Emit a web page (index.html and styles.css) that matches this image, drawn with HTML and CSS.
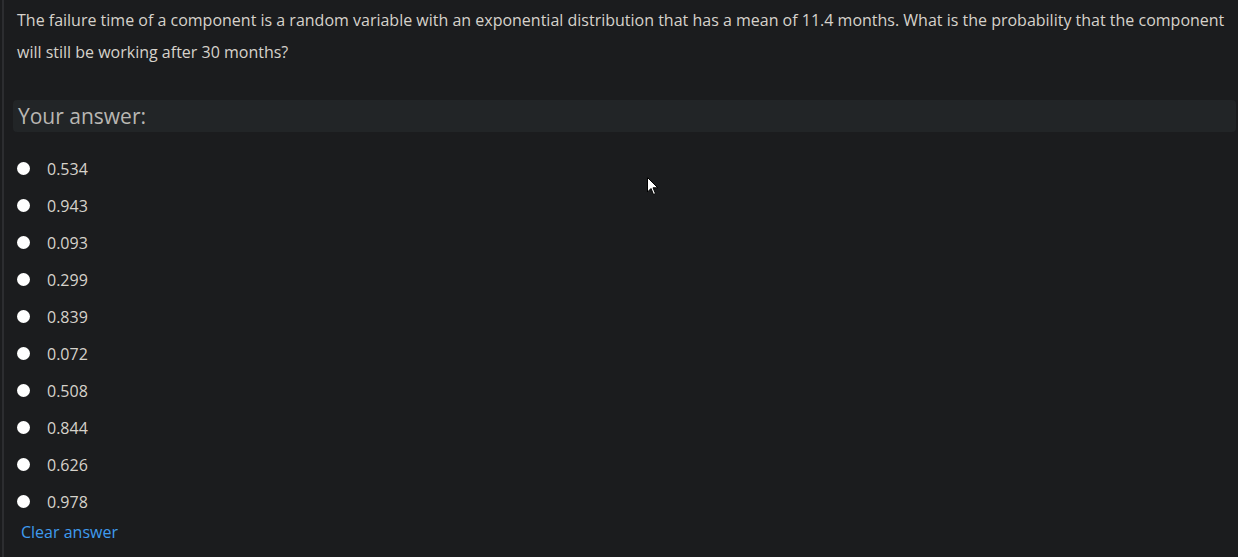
FILE: index.html
```html
<!DOCTYPE html>
<html>
<head>
<meta charset="utf-8">
<link rel="stylesheet" href="styles.css">
</head>
<body>
<div class="page">
  <div class="question">The failure time of a component is a random variable with an exponential distribution that has a mean of 11.4 months. What is the probability that the component will still be working after 30 months?</div>
  <div class="answer-head">Your answer:</div>
  <ul class="options">
    <li><label><input type="radio" name="a"><span>0.534</span></label></li>
    <li><label><input type="radio" name="a"><span>0.943</span></label></li>
    <li><label><input type="radio" name="a"><span>0.093</span></label></li>
    <li><label><input type="radio" name="a"><span>0.299</span></label></li>
    <li><label><input type="radio" name="a"><span>0.839</span></label></li>
    <li><label><input type="radio" name="a"><span>0.072</span></label></li>
    <li><label><input type="radio" name="a"><span>0.508</span></label></li>
    <li><label><input type="radio" name="a"><span>0.844</span></label></li>
    <li><label><input type="radio" name="a"><span>0.626</span></label></li>
    <li><label><input type="radio" name="a"><span>0.978</span></label></li>
  </ul>
  <a class="clear" href="#">Clear answer</a>
  <svg class="cursor" width="12" height="19" viewBox="0 0 12 19"><path d="M0.5 0.5 L0.5 15 L4 11.5 L6.5 17.5 L8.5 16.5 L6 10.8 L10.8 10.8 Z" fill="#fff" stroke="#000" stroke-width="1"/></svg>
</div>
</body>
</html>
```
FILE: styles.css
```css
html, body {
  margin: 0;
  padding: 0;
  background: #1b1c1e;
}
body {
  font-family: "Open Sans", "Noto Sans", sans-serif;
  color: #d6d2cb;
}
.page {
  position: relative;
  height: 557px;
  margin-left: 2px;
  border-left: 2px solid #2c2d30;
  padding: 4px 2px 0 0;
  box-sizing: border-box;
}
.question {
  font-size: 16px;
  line-height: 32px;
  padding-left: 13px;
  padding-right: 8px;
}
.answer-head {
  margin: 32px 0 0 9px;
  height: 32px;
  line-height: 32px;
  padding-left: 5px;
  background: #222527;
  border-radius: 4px;
  font-size: 21px;
  color: #b9b7b3;
}
.options {
  list-style: none;
  margin: 18px 0 0 0;
  padding: 0;
}
.options li {
  height: 37px;
  display: flex;
  align-items: center;
}
.options label {
  display: flex;
  align-items: center;
  font-size: 16px;
}
.options input {
  appearance: none;
  -webkit-appearance: none;
  width: 13px;
  height: 13px;
  margin: -1px 0 0 13px;
  border-radius: 50%;
  background: #fff;
  border: none;
}
.options span {
  margin-left: 17px;
}
.clear {
  display: block;
  margin: 1px 0 0 17px;
  font-size: 16px;
  line-height: 22px;
  color: #3f9bef;
  text-decoration: none;
}
.cursor {
  position: absolute;
  left: 643px;
  top: 177px;
}
```
